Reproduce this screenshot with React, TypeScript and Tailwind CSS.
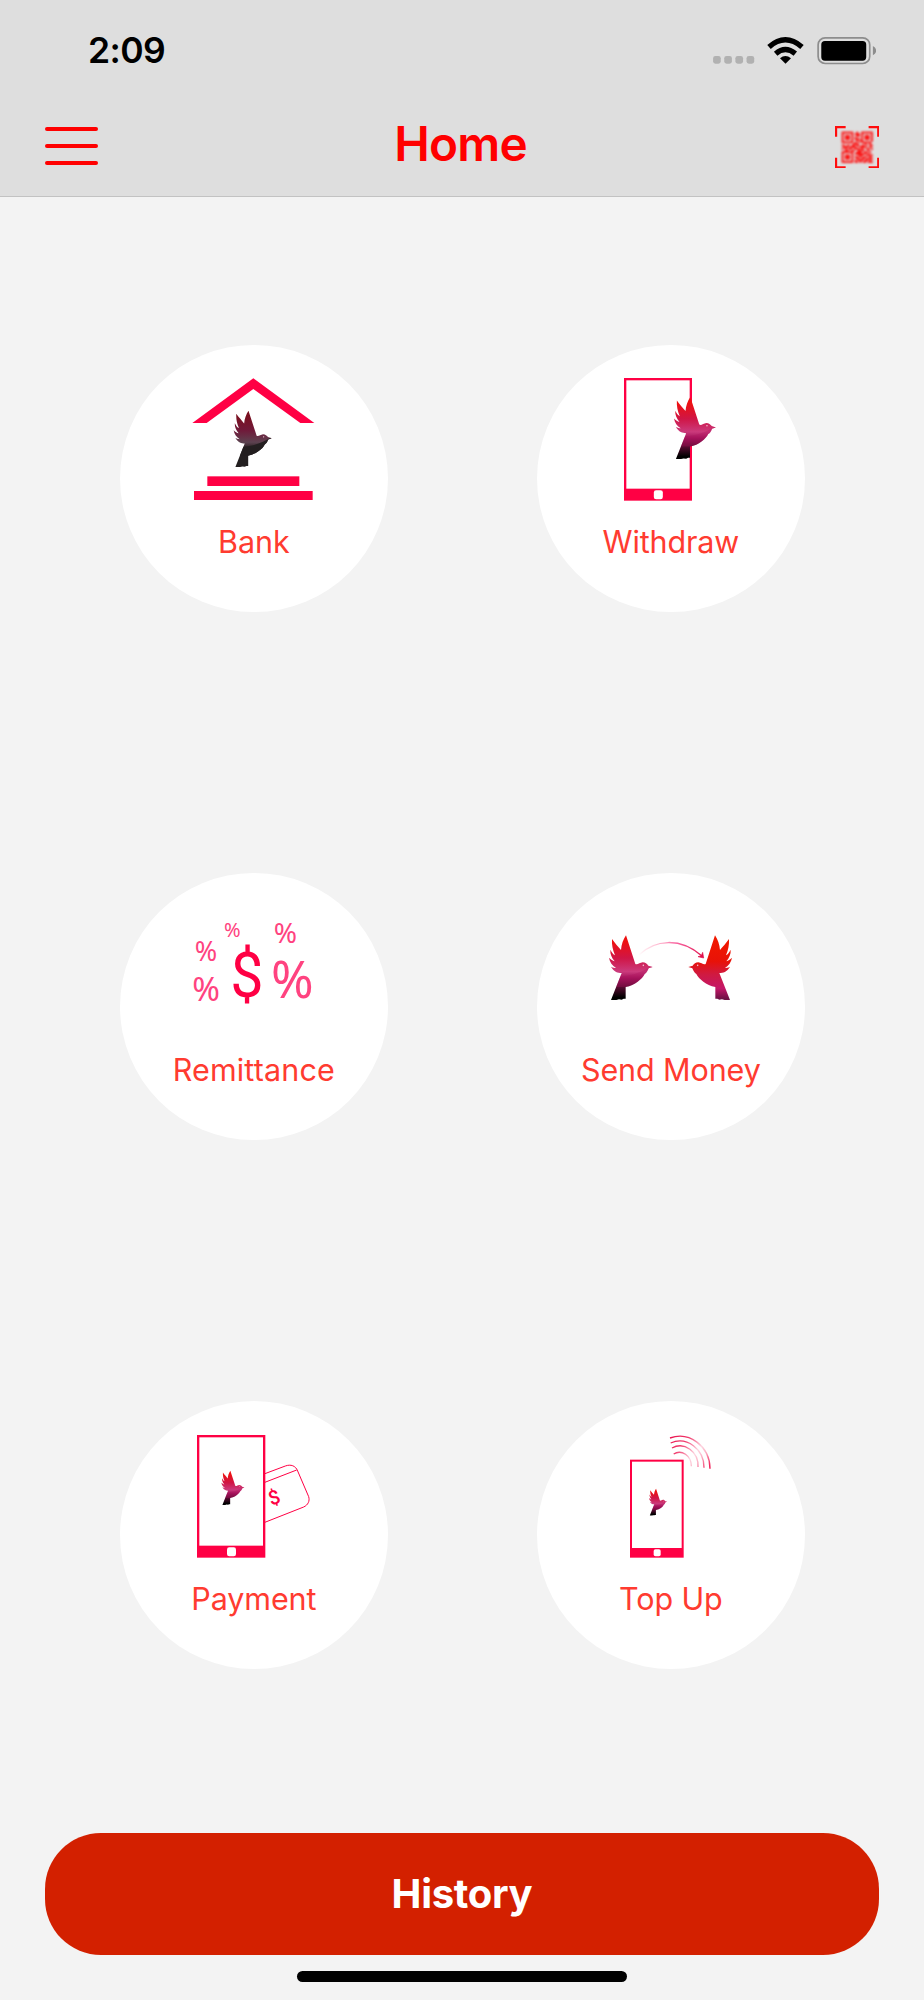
import { ReactNode } from 'react';

const PINK = '#ff0044';

// Bird silhouette on a 131x194 canvas, facing right
const BIRD_PATH =
  'M51 0 L79 86 C85 90 92 82 101 81 C109 81 114 86 118 91 L131 95 L119 99 C116 106 113 113 107 116 C103 124 96 132 86 139 C76 147 64 152 50 155 L50 190 L44 190 L38 193 L30 192 L22 194 L6 194 L38 113 C27 113 15 110 6 94 C12 97 17 98 21 98 C10 91 2 80 0 67 C6 73 11 76 17 78 C8 67 3 56 4 43 C9 52 12 57 18 60 C11 44 8 28 9 11 C18 24 28 34 36 44 C37 28 43 12 51 0 Z';

const BIRD_COLORS = {
  dark: ['#7a1020', '#701a3a', '#5d4250', '#2a2022', '#231f20'],
  vivid: ['#ee1111', '#d01545', '#cb3a7c', '#a3145c', '#000000'],
  red: ['#f01800', '#e81208', '#d01a40', '#c41768', '#6e1245'],
};

const BIRD_STOPS = {
  dark: [0.1, 0.35, 0.56, 0.66, 0.7],
  vivid: [0.1, 0.35, 0.56, 0.66, 0.96],
  red: [0.1, 0.4, 0.6, 0.82, 0.98],
};

interface BirdProps {
  id: string;
  x: number;
  y: number;
  scale: number;
  tone?: keyof typeof BIRD_COLORS;
  flip?: boolean;
}

function Bird({ id, x, y, scale, tone = 'vivid', flip = false }: BirdProps) {
  return (
    <g transform={`translate(${x} ${y}) scale(${flip ? -scale : scale} ${scale})`}>
      <defs>
        <linearGradient id={id} x1="0" y1="0" x2="0" y2="1">
          {BIRD_COLORS[tone].map((color, i) => (
            <stop key={i} offset={BIRD_STOPS[tone][i]} stopColor={color} />
          ))}
        </linearGradient>
        <clipPath id={`${id}-clip`}>
          <path d={BIRD_PATH} />
        </clipPath>
      </defs>
      <path d={BIRD_PATH} fill={`url(#${id})`} />
      {/* shaded belly */}
      {tone !== 'red' && (
        <path
          d="M20 124 C60 124 95 114 131 90 L131 155 L20 155 Z"
          fill={tone === 'dark' ? '#231f20' : '#b00f5c'}
          opacity={tone === 'dark' ? 0.95 : 0.3}
          clipPath={`url(#${id}-clip)`}
        />
      )}
      <circle cx="103" cy="90" r="2.4" fill="#f3c4d4" />
    </g>
  );
}

interface PhoneProps {
  x: number;
  y: number;
  w: number;
  h: number;
  stroke: number;
  bar: number;
  button: number;
}

function Phone({ x, y, w, h, stroke, bar, button }: PhoneProps) {
  return (
    <g>
      <rect x={x} y={y} width={w} height={h} fill={PINK} />
      <rect x={x + stroke} y={y + stroke} width={w - stroke * 2} height={h - stroke - bar} fill="#fff" />
      <rect x={x + w / 2 - button / 2 + 1} y={y + h - bar / 2 - button / 2} width={button} height={button} rx={button / 4} fill="#fff" />
    </g>
  );
}

function Percent({ x, y, size }: { x: number; y: number; size: number }) {
  return (
    <text x={x} y={y} fontSize={size} fill="#ff4380" textAnchor="middle" fontFamily="'Noto Sans', 'Open Sans', sans-serif">
      %
    </text>
  );
}

function Dollar({ size, weight = 400 }: { size: number; weight?: number }) {
  return (
    <text fontSize={size} fontWeight={weight} fill={PINK} textAnchor="middle" fontFamily="Roboto, 'Noto Sans', sans-serif">
      $
    </text>
  );
}

function BankIcon() {
  return (
    <>
      <path d="M1 135 L184 1 L367 135 L325 135 L184 33 L44 135 Z" fill={PINK} />
      <rect x="46" y="295" width="276" height="29" fill={PINK} />
      <rect x="6" y="339" width="356" height="27" fill={PINK} />
      <Bird id="bird-bank" x={125} y={98} scale={0.872} tone="dark" />
    </>
  );
}

function WithdrawIcon() {
  return (
    <>
      <Phone x={45} y={0} w={204} h={368} stroke={7} bar={36} button={27} />
      <Bird id="bird-withdraw" x={195} y={57} scale={0.96} />
    </>
  );
}

function RemittanceIcon() {
  return (
    <>
      <Percent x={121} y={94} size={60} />
      <Percent x={280} y={110} size={84} />
      <Percent x={42} y={165} size={81} />
      <Percent x={42} y={284} size={100} />
      <Percent x={301} y={275} size={154} />
      <g transform="translate(165 273) scale(0.93 1)">
        <Dollar size={191} />
      </g>
    </>
  );
}

function SendMoneyIcon() {
  return (
    <>
      <defs>
        <linearGradient id="send-arc" x1="0" y1="0" x2="1" y2="0">
          <stop offset="0" stopColor="#ff0044" stopOpacity="0" />
          <stop offset="0.25" stopColor="#ff2a70" stopOpacity="0.25" />
          <stop offset="0.6" stopColor="#f5267a" stopOpacity="0.7" />
          <stop offset="1" stopColor="#e0104c" />
        </linearGradient>
      </defs>
      <Bird id="bird-from" x={0} y={88} scale={1} />
      <Bird id="bird-to" x={369} y={88} scale={1} tone="red" flip />
      <path d="M88 148 C138 99 215 94 279 150" fill="none" stroke="url(#send-arc)" strokeWidth="4" />
      <path d="M284 156 L267 152 L277 149 L281 139 Z" fill="#e0104c" stroke="#e0104c" strokeWidth="2" />
    </>
  );
}

function PaymentIcon() {
  return (
    <>
      <g fill="none" stroke={PINK} strokeWidth="3">
        <path d="M216 117 L280 93 C296 87 311 92 317 108 L350 185 C354 198 348 210 335 216 L216 263" />
        <path d="M216 143 L314 105" />
      </g>
      <g transform="translate(246 187) rotate(-20) translate(0 21)">
        <Dollar size={59} weight={500} />
      </g>
      <Phone x={15} y={0} w={205} h={368} stroke={7} bar={36} button={27} />
      <Bird id="bird-payment" x={88} y={107} scale={0.53} />
    </>
  );
}

function TopUpIcon() {
  return (
    <>
      <defs>
        <linearGradient id="signal" gradientUnits="userSpaceOnUse" x1="183" y1="0" x2="300" y2="101">
          <stop offset="0" stopColor="#e8104c" />
          <stop offset="0.3" stopColor="#f03a6c" />
          <stop offset="0.6" stopColor="#fdd5e0" />
          <stop offset="0.75" stopColor="#fbb0c4" />
          <stop offset="1" stopColor="#f0104c" />
        </linearGradient>
      </defs>
      <g fill="none" stroke="url(#signal)" strokeWidth="4">
        <path d="M183 9 A91 98 0 0 1 303 101" />
        <path d="M185 24 A73 79 0 0 1 285 98" />
        <path d="M189 39 A54 60 0 0 1 267 96" />
        <path d="M194 57 A36 42 0 0 1 247 94" />
      </g>
      <Phone x={63} y={74} w={161} h={294} stroke={6} bar={29} button={21} />
      <Bird id="bird-topup" x={120} y={161} scale={0.415} />
    </>
  );
}

const QR_ROWS = [
  '1111111001001111111',
  '1000001011101000001',
  '1011101001101011101',
  '1011101010001011101',
  '1011101011101011101',
  '1000001001011000001',
  '1111111010101111110',
  '0000000111000010010',
  '1101101101101101011',
  '0111011110011110010',
  '1010110011101001101',
  '0011001100111100100',
  '1111111001110011010',
  '1000001011111110100',
  '1011101000111001111',
  '1011101011010110010',
  '1011101001101101111',
  '1000001010111011010',
  '1111111011010110111',
];

function QrIcon() {
  return (
    <svg viewBox="0 0 133 127" className="h-[42.3px] w-[44.3px]">
      <defs>
        <filter id="soften">
          <feGaussianBlur stdDeviation="2.5" />
        </filter>
        <filter id="soften-edge">
          <feGaussianBlur stdDeviation="1" />
        </filter>
      </defs>
      <path
        d="M32 3 H3 V32 M101 3 H130 V32 M3 95 V124 H32 M130 95 V124 H101"
        fill="none"
        stroke="#ff1010"
        strokeWidth="7"
        filter="url(#soften-edge)"
      />
      <g fill="#ff0000" filter="url(#soften)">
        {QR_ROWS.map((row, r) =>
          row.split('').map((cell, c) => cell === '1' && <rect key={`${r}-${c}`} x={20 + c * 4.9} y={17 + r * 4.9} width="5.4" height="5.4" />)
        )}
      </g>
    </svg>
  );
}

function StatusIcons() {
  return (
    <svg viewBox="0 0 490 82" className="h-[27.3px] w-[163.3px]">
      {/* signal dots */}
      {[0, 33.5, 67, 100.5].map((x) => (
        <rect key={x} x={x} y="57" width="23" height="23" rx="7" fill="#b1b1b1" />
      ))}
      {/* wifi */}
      <g fill="none" stroke="#000" strokeWidth="16">
        <path d="M168 30 Q217 -13 267 30" />
        <path d="M188 50 Q217 25 247 50" />
      </g>
      <path d="M201 64 Q217 50 234 64 L217.500 80 Z" />
      {/* battery */}
      <rect x="315.500" y="2.500" width="155" height="77" rx="21" fill="none" stroke="#8d8d8d" strokeWidth="5" />
      <rect x="325" y="12" width="135" height="59" rx="11" />
      <path d="M480 27 Q490 32 490 41 Q490 50 480 55 Z" fill="#8d8d8d" />
    </svg>
  );
}

interface Tile {
  label: string;
  tracking: string;
  icon: ReactNode;
}

const TILES: Tile[] = [
  { label: 'Bank', tracking: 'tracking-[-0.1px]', icon: <BankIcon /> },
  { label: 'Withdraw', tracking: 'tracking-[-0.15px]', icon: <WithdrawIcon /> },
  { label: 'Remittance', tracking: 'tracking-[0.15px]', icon: <RemittanceIcon /> },
  { label: 'Send Money', tracking: 'tracking-[-0.1px]', icon: <SendMoneyIcon /> },
  { label: 'Payment', tracking: 'tracking-[-0.1px]', icon: <PaymentIcon /> },
  { label: 'Top Up', tracking: 'tracking-[-0.1px]', icon: <TopUpIcon /> },
];

export default function App() {
  return (
    <div className="flex h-[2000px] w-[924px] flex-col bg-[#f3f3f3] font-['Inter','Liberation_Sans',sans-serif]">
      <header className="h-[197px] shrink-0 border-b border-[#c2c2c2] bg-[#dedede]">
        <div className="flex h-[100px] items-center justify-between pt-[2px] pr-12 pl-[88px]">
          <span className="text-[35.5px] font-semibold tracking-[-0.6px]">2:09</span>
          <StatusIcons />
        </div>
        <nav className="flex h-[92px] items-center justify-between px-[44.7px]">
          <button aria-label="Menu" className="flex w-[53.500px] flex-col gap-[13px]">
            <span className="h-[3.700px] rounded-full bg-[#ff0000]" />
            <span className="h-[3.700px] rounded-full bg-[#ff0000]" />
            <span className="h-[3.700px] rounded-full bg-[#ff0000]" />
          </button>
          <h1 className="pr-[12px] pb-[5px] text-[47.7px] leading-[60px] font-semibold tracking-[-0.8px] text-[#ff0000]">Home</h1>
          <div className="pt-[2px]">
            <QrIcon />
          </div>
        </nav>
      </header>

      <main className="grid grid-cols-[267.7px_267.7px] gap-x-[149.3px] gap-y-[260.5px] pt-[147.5px] pl-[120px]">
        {TILES.map((tile) => (
          <button key={tile.label} className="flex h-[267.7px] flex-col items-center rounded-full bg-white pt-[33.700px]">
            <svg viewBox="0 0 369 369" className="size-[123px] overflow-visible">
              {tile.icon}
            </svg>
            <span className={`mt-[18px] text-[30.5px] leading-[45px] whitespace-nowrap text-[#ff3b30] ${tile.tracking}`}>{tile.label}</span>
          </button>
        ))}
      </main>

      <footer className="flex flex-col items-center px-[45px] pt-[164px]">
        <button className="h-[122.500px] w-full rounded-[56px] bg-[#d32000] text-[40px] font-bold tracking-[-0.3px] text-white">History</button>
        <div className="mt-[15.500px] h-[11px] w-[330px] rounded-full bg-black" />
      </footer>
    </div>
  );
}
